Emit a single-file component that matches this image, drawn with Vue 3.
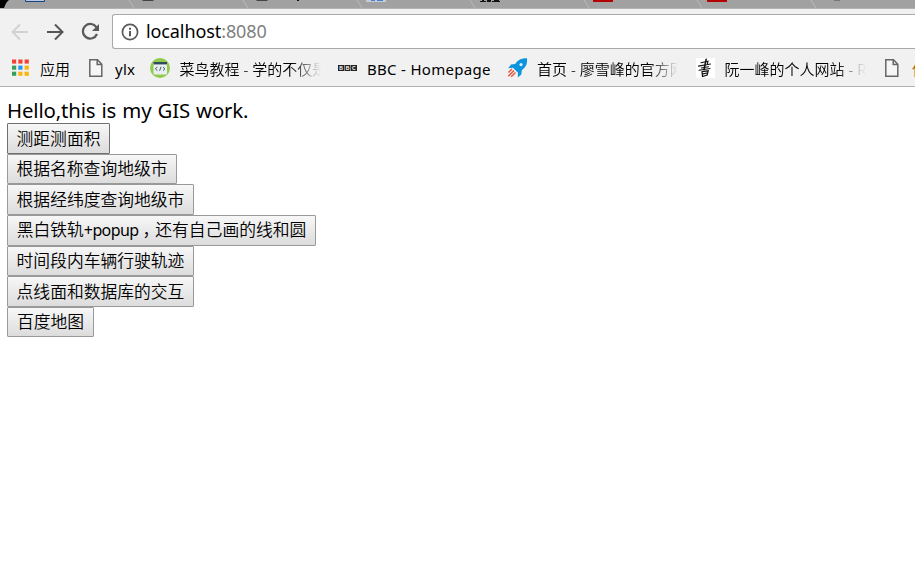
<script setup>
const bookmarks = [
  { icon: 'apps', label: '应用', width: 77, iconWidth: 28 },
  { icon: 'page', label: 'ylx', width: 61, iconWidth: 26, latin: true },
  { icon: 'code', label: '菜鸟教程 - 学的不仅是技术', width: 188, iconWidth: 29.5, fade: true },
  { icon: 'bbc', label: 'BBC - Homepage', width: 169, iconWidth: 29, latin: true },
  { icon: 'rocket', label: '首页 - 廖雪峰的官方网站', width: 189, iconWidth: 30, fade: true },
  { icon: 'ink', label: '阮一峰的个人网站 - Ruan', width: 189, iconWidth: 28.5, fade: true },
  { icon: 'page', label: '使用', width: 61, iconWidth: 27, clipped: true },
]
const actions = [
  { parts: ['测距测面积'], width: 103, active: true },
  { parts: ['根据名称查询地级市'], width: 170 },
  { parts: ['根据经纬度查询地级市'], width: 187 },
  { parts: ['黑白铁轨', '+popup', '，', '还有自己画的线和圆'], width: 309 },
  { parts: ['时间段内车辆行驶轨迹'], width: 187 },
  { parts: ['点线面和数据库的交互'], width: 187 },
  { parts: ['百度地图'], width: 87 },
]
const separators = [129, 243, 357, 470, 584, 697, 811]
const dots = ['#f44336', '#f44336', '#f44336', '#34a05a', '#2196f3', '#fbb40a', '#34a05a', '#fbb40a', '#fbb40a']
</script>

<template>
  <div class="window">
    <svg class="tabs" width="915" height="9" viewBox="0 0 915 9">
      <rect width="915" height="9" fill="#a1a1a1" />
      <path d="M0 0H9Q6 2 4 8H0Z" fill="#000" />
      <path v-for="x in separators" :key="x" :d="`M${x} 0L${x + 5} 8`" stroke="#b9b9b9" fill="none" />
      <path d="M25.5 0V1.5H44.5V0" fill="#b8c9df" stroke="#17437e" />
      <path d="M142 0H154L153 1H143ZM256 0H268L267 1H257Z" fill="#444" />
      <path d="M297 0H299V1H297Z" fill="#111" />
      <path d="M366 0H386V2H366Z" fill="#c4cbd6" />
      <path d="M371 0H375V1H371ZM377 0H383V1H377Z" fill="#4580ce" />
      <path d="M480 1H486V2H480ZM482 0H484V2H482ZM487 0H491V2H487ZM492 1H500V2H492ZM494 0H499V1H494Z" fill="#111" />
      <path d="M593 0H613V2H593ZM707 0H727V2H707Z" fill="#b40000" />
      <path d="M834 0H840V1H834ZM837 0H839V1H837Z" fill="#777" />
      <path d="M0 8.5H915" stroke="#b2b2b2" />
    </svg>

    <header class="toolbar">
      <svg class="nav" width="112" height="39" viewBox="0 9 112 39" fill="none" stroke-width="2">
        <path d="M28 32H13M20 24.5L12.5 32L20 39.5" stroke="#d1d1d1" />
        <path d="M47 32H62M55 24.5L62.5 32L55 39.5" stroke="#555" />
        <path d="M96.5 27.5A7.3 7.3 0 1 0 97 34" stroke="#5a5a5a" stroke-width="2.2" />
        <path d="M99 24V31H92Z" fill="#5a5a5a" />
      </svg>
      <div class="address">
        <svg class="info" width="18" height="18" viewBox="0 0 18 18">
          <circle cx="9" cy="9" r="7.6" fill="none" stroke="#5a5a5a" stroke-width="1.7" />
          <path d="M8 4.8H10V6.7H8ZM8 8H10V13.3H8Z" fill="#5a5a5a" />
        </svg>
        <span class="url">localhost<span class="port">:8080</span></span>
      </div>
    </header>

    <nav class="bookmarks">
      <div v-for="(b, i) in bookmarks" :key="i" class="bookmark" :style="{ width: b.width + 'px' }">
        <span class="icon" :style="{ width: b.iconWidth + 'px' }">
          <svg v-if="b.icon === 'apps'" width="17" height="20" viewBox="0 0 17 20">
            <rect v-for="(c, n) in dots" :key="n" :x="(n % 3) * 6.3" :y="1.5 + Math.floor(n / 3) * 6.1" width="4.2" height="4.1" :fill="c" />
          </svg>
          <svg v-else-if="b.icon === 'page'" width="14" height="20" viewBox="0 0 14 20">
            <path d="M.8 1.8H8.5L12.8 6.2V18.2H.8ZM8.2 2V6.5H12.6" fill="#f6f6f6" stroke="#666" stroke-width="1.5" />
          </svg>
          <svg v-else-if="b.icon === 'code'" width="20" height="20" viewBox="0 0 20 20">
            <circle cx="10" cy="10" r="10" fill="#92ca4c" />
            <rect x="3.5" y="4" width="13.5" height="12.5" rx="1" fill="#e9eef0" />
            <path d="M3.5 4H17V6.4H3.5Z" fill="#324a5e" />
            <path d="M7.4 9L5.4 10.8L7.4 12.6M13 9L15 10.8L13 12.6M11 8.8L9.6 12.8" fill="none" stroke="#324a5e" stroke-width=".9" />
          </svg>
          <svg v-else-if="b.icon === 'bbc'" class="bbc" width="19" height="6" viewBox="0 0 19 6">
            <path d="M0 0H6V6H0ZM6.5 0H12.5V6H6.5ZM13 0H19V6H13Z" fill="#222" />
            <text x="1.3" y="4.8" class="bbc-text">BBC</text>
          </svg>
          <svg v-else-if="b.icon === 'rocket'" width="21" height="21" viewBox="0 0 21 21">
            <path d="M20 .3C14 .3 11 2 8.2 6L4 6.5L1.2 10.2L6 9.8L11 14.8L10.8 19.5L14.3 16.6L14.8 12.2C19 9 20.5 6 20 .3Z" fill="#0c94dc" />
            <circle cx="14" cy="6.6" r="1.6" fill="#d8f1fc" />
            <path d="M5 11L1.5 14.5M7 12.5L1.3 18.3M8.5 14.5L4.2 18.8" fill="none" stroke="#e75338" stroke-width="1.4" />
          </svg>
          <svg v-else width="19" height="20" viewBox="0 0 19 20">
            <rect width="19" height="20" fill="#fff" />
            <g fill="none" stroke="#111" stroke-linecap="round">
              <path d="M5 4.8L12 3.2L11 6.8M2.5 8.1L14.5 6M5.3 10L12.5 8.7M3 12.3L14 10.5" stroke-width="1.1" />
              <path d="M10.2 1.2L8 11.5" stroke-width="1.5" />
              <path d="M6 13.7L12.2 12.8L11.2 17L6.5 18.5L6 13.7M7 15.8L11 15" stroke-width="1.2" />
            </g>
          </svg>
        </span>
        <span class="label" :class="{ fade: b.fade, clipped: b.clipped, latin: b.latin }">{{ b.label }}</span>
      </div>
    </nav>

    <main class="page">
      <p class="hello">Hello,this is my GIS work.</p>
      <div v-for="a in actions" :key="a.parts[0]" class="row">
        <button class="action" :class="{ active: a.active }" :style="{ width: a.width + 'px' }"><span v-for="p in a.parts" :key="p" :class="{ word: p === '+popup', comma: p === '，' }">{{ p }}</span></button>
      </div>
    </main>
  </div>
</template>

<style>
body {
  margin: 0;
  background: #fff;
}
</style>

<style scoped>
.window {
  width: 915px;
  height: 579px;
  overflow: hidden;
  font-family: "Noto Sans", "Noto Sans CJK SC", sans-serif;
  font-weight: 350;
  color: #000;
}
.tabs {
  display: block;
}
.toolbar {
  display: flex;
  height: 40px;
  background: #f1f1f1;
}
.nav {
  flex: none;
}
.address {
  box-sizing: border-box;
  flex: 1;
  display: flex;
  align-items: center;
  height: 35px;
  margin-top: 5px;
  padding-left: 8px;
  border: 1px solid #a9a9a9;
  border-right: 0;
  border-radius: 3px 0 0 3px;
  background: #fff;
}
.info {
  margin-top: 1px;
}
.url {
  margin: 0 0 2px 7px;
  font-size: 18px;
  font-weight: 400;
  line-height: 30px;
  letter-spacing: -0.1px;
}
.port {
  color: #808080;
}
.bookmarks {
  box-sizing: border-box;
  display: flex;
  height: 38px;
  padding: 9px 0 0 12px;
  background: #f1f1f1;
  border-bottom: 1px solid #b3b3b3;
  overflow: hidden;
}
.bookmark {
  flex: none;
  display: flex;
  height: 22px;
}
.icon {
  flex: none;
}
.icon svg {
  display: block;
}
.icon .bbc {
  margin-top: 7px;
}
.bbc-text {
  font: bold 5px "Liberation Sans", sans-serif;
  letter-spacing: 2.8px;
  fill: #fff;
}
.label {
  white-space: nowrap;
  overflow: hidden;
  font-size: 15px;
  line-height: 22px;
}
.latin {
  font-weight: 400;
  letter-spacing: 0.3px;
}
.fade {
  width: 141px;
  mask-image: linear-gradient(to right, #000 112px, transparent 141px);
}
.clipped {
  color: #a65f00;
}
.page {
  padding: 11px 7px 0;
}
.hello {
  margin: 0;
  height: 25.3px;
  font-size: 20.4px;
  font-weight: 400;
  line-height: 24px;
  word-spacing: 0.9px;
  letter-spacing: -0.15px;
  white-space: nowrap;
}
.row {
  height: 30.6px;
}
.action {
  box-sizing: border-box;
  display: block;
  height: 30.6px;
  padding: 0;
  border: 1px solid #999;
  border-radius: 1px;
  background: linear-gradient(#f7f7f7, #dcdcdc);
  font-family: inherit;
  font-weight: inherit;
  font-size: 16.8px;
  line-height: 28px;
  color: #000;
  white-space: nowrap;
}
.word {
  font-size: 16px;
  font-weight: 400;
  letter-spacing: -0.6px;
}
.comma {
  margin: 0 -4px 0 4px;
}
.active {
  border-color: #707070;
}
</style>
